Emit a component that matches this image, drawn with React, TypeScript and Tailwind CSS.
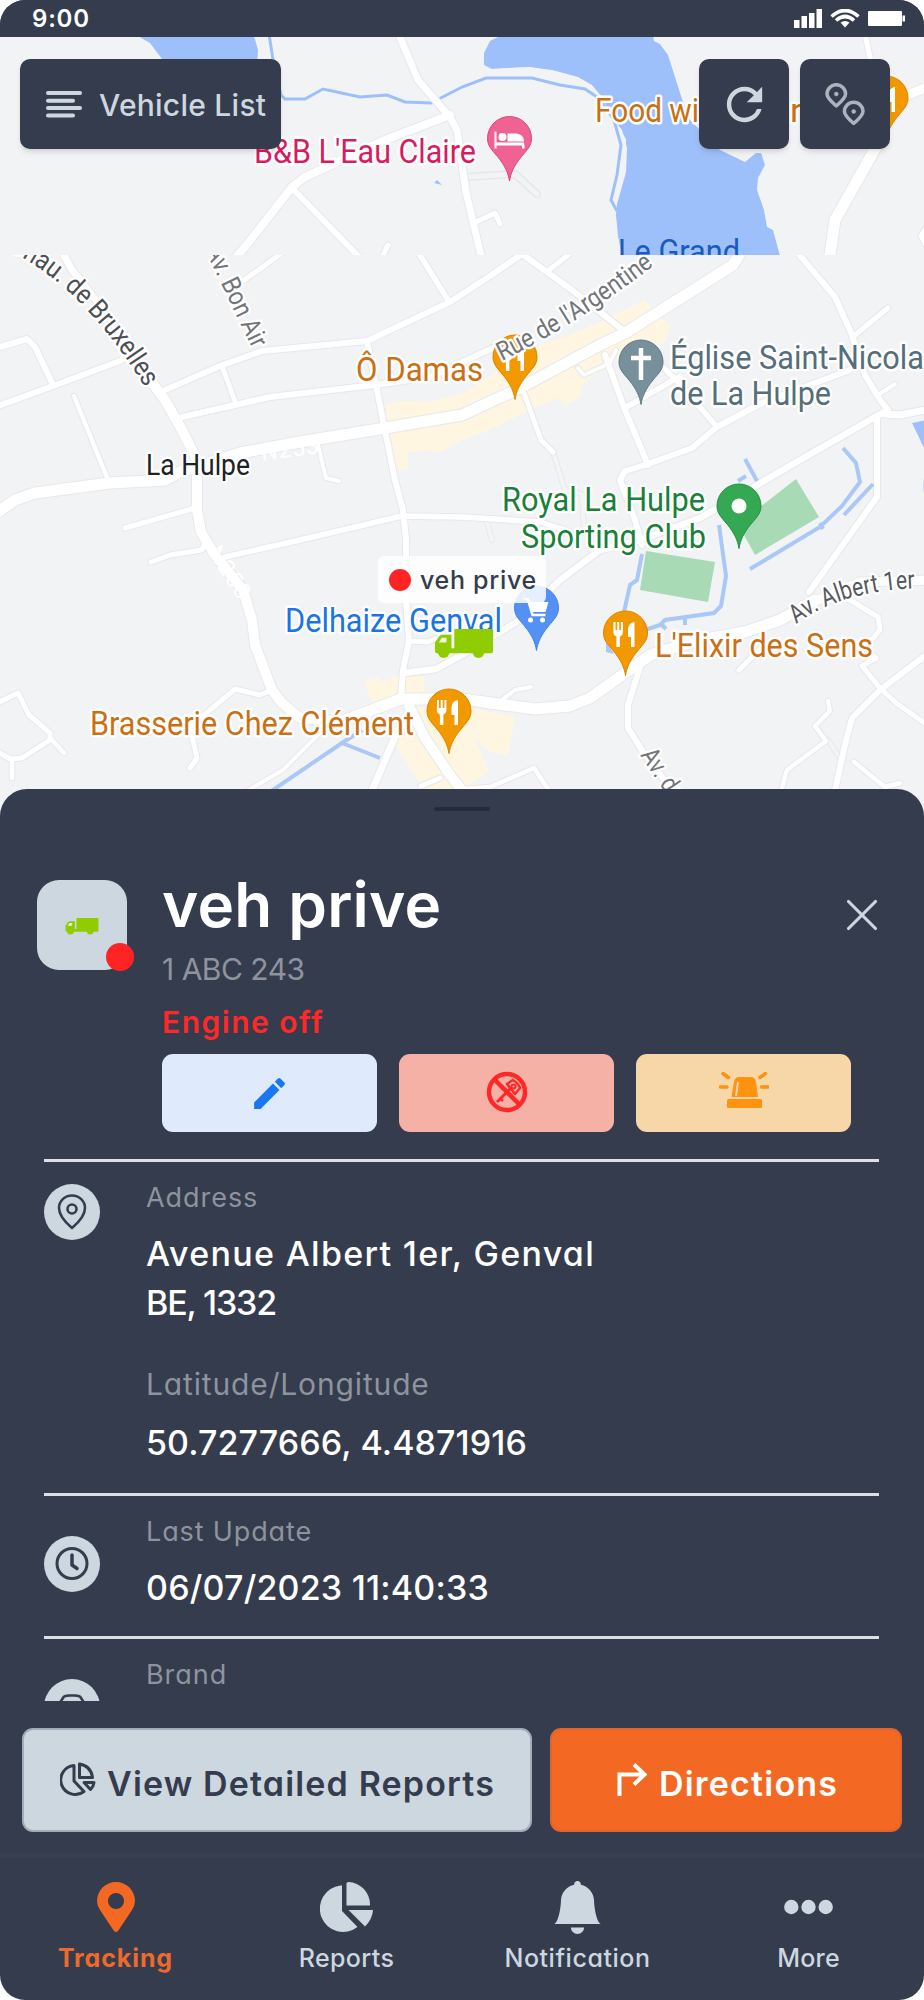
import React from 'react';
import { MdEdit, MdRefresh } from 'react-icons/md';
import { BsBellFill } from 'react-icons/bs';
import { X } from 'lucide-react';

type Road = [d: string, width: number];

interface PinProps {
  x: number;
  y: number;
  fill: string;
  stroke: string;
  children?: React.ReactNode;
}

interface LabelProps {
  x: number;
  y: number;
  w: number;
  fill: string;
  size?: number;
  children: string;
}

interface StreetNameProps {
  id: string;
  w: number;
  fill: string;
  size?: number;
  children: string;
}

// Roads of the upper tile, above the seam
const northRoads: Road[] = [
  ['M397 30L418 80L450 117L457 130L462 165L466 192L482 260', 7],
  ['M450 115L385 140L305 177L292 187L245 247L232 262', 8],
  ['M292 188L364 262', 6],
  ['M388 245L380 262', 5],
  ['M474 223L495 213L500 224', 5],
  ['M864 30L872 66', 5],
  ['M930 86L900 98', 9],
  ['M880 140L835 220L829 262', 11],
  ['M930 222L921 236L930 252', 5],
];

const southRoads: Road[] = [
  ['M60 248L72 270L110 318L150 382', 7],
  ['M0 347L27 339L35 347L53 385', 6],
  ['M-5 407L53 386L120 361L134 350', 6],
  ['M74 396L108 480', 4.5],
  ['M165 390L220 366L262 351L367 341L450 302L490 276L522 254', 6],
  ['M222 366L236 404', 5],
  ['M182 417L235 405L270 397L375 385L430 377L495 347', 6],
  ['M367 341L378 395L385 430L395 480L403 510L406 540L406 600L409 640L403 670L401 700', 6],
  ['M418 252L448 300', 5.5],
  ['M318 445L326 478L339 481', 4],
  ['M243 281L282 253', 5],
  ['M125 528L195 508', 5],
  ['M151 562L170 555L202 550L206 540', 5],
  ['M225 557L300 540L402 516L462 517L540 522L565 530', 5.5],
  ['M-5 704L18 693L29 715L50 733L50 740L22 758L10 759L-2 752', 5],
  ['M50 738L64 753M12 760L12 778', 4.5],
  ['M272 690L260 695L235 689L190 727L197 758L190 768', 5],
  ['M320 733L283 770L240 795', 4],
  ['M398 730L370 795', 7],
  ['M409 706L425 738L450 775L466 795', 10],
  ['M440 778L421 786', 5],
  ['M409 641L427 642L440 637', 5],
  ['M404 673L436 669L462 655L520 620L560 580L600 550L640 540L700 518L745 492L800 460L877 416L885 412', 6.5],
  ['M885 414L900 415L930 409', 7],
  ['M877 416L877 497L809 592', 6],
  ['M797 252L835 297L852 335L865 375L880 400L888 410', 6],
  ['M855 335L888 308', 5],
  ['M878 395L895 384', 4],
  ['M850 370L762 403L717 427L692 448L645 465L625 471L620 480L635 520L642 545', 6],
  ['M605 355L625 410L648 465', 6],
  ['M625 408L665 385L680 376M664 368L680 384L717 427', 5.5],
  ['M522 254L572 290L628 334', 6],
  ['M549 270L572 252', 5],
  ['M578 368L584 375L610 363L616 350', 4],
  ['M523 390L541 440L553 452', 5],
  ['M640 667L628 705L628 728L645 755L680 800', 6],
  ['M503 699L515 690L531 687', 4],
  ['M739 670L762 647', 5],
  ['M845 597L878 617L880 630L865 648L876 658L862 666L880 688L895 702L930 727', 5],
  ['M930 652L880 690L852 718L845 745L834 795', 6],
  ['M828 701L830 711L815 726L826 741L787 770L780 795', 4.5],
  ['M854 762L885 787L900 783', 4.5],
  ['M455 790L490 787L534 768L550 792', 4.5],
  ['M150 380L165 400L182 430L197 460L197 510L201 532L215 555L243 590L252 620L255 645L272 690L282 703L300 718L345 722', 10],
  ['M-5 514L15 500L35 493L110 483L165 480L180 472L240 453L300 442L385 428L462 415L520 388L600 345L625 333L660 311L733 265L742 250', 11],
  ['M340 722L401 699L462 699L535 709L570 706L590 698L625 673L650 655L700 640L745 632L780 620L815 600', 11],
  ['M809 604L860 582L930 580', 9],
];

const streams = [
  'M642 554L637 580L630 585L624 612',
  'M719 525L726 576L721 606L714 613L665 620L660 625L645 630',
  'M685 617L685 625',
  'M661 624L666 629',
  'M750 569L820 527L842 506L860 482L856 463L843 448',
  'M844 515L873 484',
  'M820 523L823 529',
  'M745 459L757 481',
  'M738 481L746 476',
  'M270 792L342 743L362 730',
  'M342 743L380 758',
];

const Roads = ({ list }: { list: Road[] }) => (
  <g fill="none" strokeLinecap="round" strokeLinejoin="round">
    {list.map(([d, w]) => (
      <path key={`case-${d}`} d={d} stroke="#e6e8eb" strokeWidth={w + 2} />
    ))}
    {list.map(([d, w]) => (
      <path key={d} d={d} stroke="#ffffff" strokeWidth={w} />
    ))}
  </g>
);

const Pin = ({ x, y, fill, stroke, children }: PinProps) => (
  <g transform={`translate(${x} ${y})`}>
    <path
      d="M0 42.500C-1.500 34-4 28-12 18C-18 11-22 7-22 0A22 22 0 0 1 22 0C22 7 18 11 12 18C4 28 1.500 34 0 42.500Z"
      fill={fill}
      stroke={stroke}
      strokeWidth="1"
    />
    {children}
  </g>
);

const Cutlery = () => (
  <g fill="#ffffff">
    <path d="M-12 -11h2v8h1.700v-8h2v8h1.700v-8h2v10q0 3.500-3 4.500V14h-3.500V3.500q-3-1-3-4.500Z" />
    <path d="M9 -11V14H5.500V4H2.500V-4Q3-10 9-11Z" />
  </g>
);

const Label = ({ x, y, w, fill, size = 34, children }: LabelProps) => (
  <text
    x={x}
    y={y}
    textLength={w}
    lengthAdjust="spacingAndGlyphs"
    fontSize={size}
    fill={fill}
    stroke="#ffffff"
    strokeWidth="5"
    strokeLinejoin="round"
    paintOrder="stroke"
  >
    {children}
  </text>
);

const StreetName = ({ id, w, fill, size = 26, children }: StreetNameProps) => (
  <text
    textLength={w}
    lengthAdjust="spacingAndGlyphs"
    fontSize={size}
    fill={fill}
    stroke="#ffffff"
    strokeWidth="5"
    strokeLinejoin="round"
    paintOrder="stroke"
  >
    <textPath href={`#${id}`} textLength={w} lengthAdjust="spacingAndGlyphs">
      {children}
    </textPath>
  </text>
);

const Truck = ({ className }: { className: string }) => (
  <svg viewBox="0 0 60 31" className={className} fill="#8fcc00">
    <path d="M20 0H58Q60 0 60 2V23Q60 25 58 25H2Q0 25 0 23V14L4 8Q5 6 8 6H17V20H20Z" />
    <circle cx="9" cy="24" r="6" />
    <circle cx="45" cy="24" r="6" />
    <path d="M4 14L7 9H12V14Z" fill="#eef3e0" />
  </svg>
);

const MapView = () => (
  <svg viewBox="0 37 924 790" className="block h-[790px] w-[924px]" fontFamily="Roboto, sans-serif">
    <defs>
      <clipPath id="north">
        <rect x="0" y="37" width="924" height="218" />
      </clipPath>
      <clipPath id="south">
        <rect x="0" y="255" width="924" height="572" />
      </clipPath>
      <path id="bruxelles" d="M8 250Q86 288 149 394" />
      <path id="bonair" d="M205 250L261 367" />
      <path id="argentine" d="M502 361Q590 318 680 245" />
      <path id="albert" d="M796 624Q845 588 930 588" />
      <path id="avd" d="M640 755L690 830" />
    </defs>
    <rect x="0" y="37" width="924" height="790" fill="#f1f3f5" />

    {/* Upper tile */}
    <g clipPath="url(#north)">
      <g fill="#9dc0fa">
        <path d="M138 36L150 43L162 59L166 66H257L258 50L254 36Z" />
        <path d="M500 36L490 41L484 53V65L492 69L528 67L552 70L578 77L592 85L602 97L610 115L622 130L627 148L626 172L621 190L617 204L616 215L618 236L622 256H780L773 230L767 227L764 210L757 190L758 178L765 165L761 153L756 153L745 162L720 150L690 120L682 99L668 55L660 44L654 41L653 36Z" />
        <path d="M437 180L442 185L434 183Z" />
      </g>
      {/* strip of land between the stream and the lake */}
      <path d="M492 72L530 70L558 75L582 83L598 97L610 118L623 140L620 175L613 203" fill="none" stroke="#f1f3f5" strokeWidth="6" />
      <path
        d="M269 34L274 66L281 95L285 99L305 99L323 89L360 97L387 95L405 102L431 103L462 87L486 78L532 78L560 85L585 89L600 99L614 120L621 145L617 175L611 200L617 211"
        fill="none"
        stroke="#9dc0fa"
        strokeWidth="3"
      />
      <path d="M467 177L515 174L537 194" fill="none" stroke="#e3e5e8" strokeWidth="8" strokeLinecap="round" strokeLinejoin="round" />
      <path d="M467 177L515 174L537 194" fill="none" stroke="#f1f3f5" strokeWidth="5.500" strokeLinecap="round" strokeLinejoin="round" />
      <Roads list={northRoads} />
      <Label x={254} y={162.500} w={222} fill="#d81b60">B&amp;B L'Eau Claire</Label>
      <Label x={595} y={122} w={104} fill="#cb6f12">Food wi</Label>
      <Label x={790} y={122} w={12} fill="#cb6f12">r</Label>
      <text x="618" y="263" fontSize="34" textLength="122" lengthAdjust="spacingAndGlyphs" fill="#1a5bbf">
        Le Grand
      </text>
      <Pin x={509.500} y={138.500} fill="#f06292" stroke="#e0447a">
        <path d="M-14 -7V10M14 6V10" stroke="#fff" strokeWidth="2" />
        <path d="M-14 4H14.500V10H12.500V7H-14Z" fill="#fff" />
        <circle cx="-7" cy="-1.500" r="4" fill="#fff" />
        <path d="M-2 3V-5H7Q14.500-4 14.500 3Z" fill="#fff" />
      </Pin>
      <Pin x={886} y={98} fill="#f29900" stroke="#dd8400">
        <Cutlery />
      </Pin>
    </g>

    {/* Lower tile */}
    <g clipPath="url(#south)">
      <g fill="#fef6e0">
        <path d="M385 405L400 401L430 402L462 393L500 370L540 345L570 335L600 322L645 300L653 312L660 318L670 325L665 342L630 352L583 383L580 398L565 405L558 398L520 415L490 430L462 440L440 452L425 450L408 453V470H397L390 435Z" />
        <path d="M364 682L378 677L381 682L398 676H424V700L372 702Z" />
        <path d="M395 725L409 708L462 706L515 717L508 756L487 750L475 738L489 772L470 785L455 790H425L395 745Z" />
      </g>
      <g fill="#a8dab5">
        <path d="M646 551L715 562L708 602L640 590Z" />
        <path d="M796 479L819 517L755 555L738 524Z" />
      </g>
      <path d="M912 423L926 420V452Z" fill="#9dc0fa" />
      <path d="M926 470Q921 486 926 502Z" fill="#9dc0fa" />
      <path d="M606 640L614 654L606 652Z" fill="#aac9fa" />
      <path d="M553 452L565 490L582 494L584 530M487 522L492 540M828 740L840 758" fill="none" stroke="#e6e8eb" strokeWidth="6" strokeLinecap="round" />
      <path d="M553 452L565 490L582 494L584 530M487 522L492 540M828 740L840 758" fill="none" stroke="#f3f4f6" strokeWidth="4" strokeLinecap="round" />
      <Roads list={southRoads} />
      <g fill="none" stroke="#a9c8f8" strokeWidth="4">
        {streams.map((d) => (
          <path key={d} d={d} />
        ))}
      </g>

      <text fontSize="23" fill="#ffffff" transform="translate(262 461) rotate(-8)" letterSpacing="1">N253</text>
      <text fontSize="23" fill="#ffffff" transform="translate(207 552) rotate(57)" letterSpacing="1">N253</text>

      <Pin x={515} y={357} fill="#f29900" stroke="#dd8400">
        <Cutlery />
      </Pin>
      <StreetName id="bruxelles" w={197} size={27} fill="#4b4e54">Chau. de Bruxelles</StreetName>
      <StreetName id="bonair" w={110} fill="#71757a">Av. Bon Air</StreetName>
      <StreetName id="argentine" w={180} fill="#71757a">Rue de l'Argentine</StreetName>
      <StreetName id="albert" w={126} fill="#55585d">Av. Albert 1er</StreetName>
      <StreetName id="avd" w={58} fill="#71757a">Av. de</StreetName>

      <Label x={356} y={381} w={127} fill="#cb6f12">Ô Damas</Label>
      <Label x={146} y={475} w={104} size={29} fill="#202124">La Hulpe</Label>
      <Label x={670} y={369} w={254} fill="#546e7a">Église Saint-Nicola</Label>
      <Label x={670} y={405} w={161} fill="#546e7a">de La Hulpe</Label>
      <Label x={502} y={511} w={203} fill="#188038">Royal La Hulpe</Label>
      <Label x={521} y={548} w={185} fill="#188038">Sporting Club</Label>
      <Label x={285} y={632} w={217} fill="#1a73e8">Delhaize Genval</Label>
      <Label x={655} y={657} w={218} fill="#cb6f12">L'Elixir des Sens</Label>
      <Label x={90} y={735} w={324} fill="#cb6f12">Brasserie Chez Clément</Label>

      <Pin x={641} y={362} fill="#78909c" stroke="#5c7885">
        <path d="M0 -14V18M-10 -4H10" stroke="#fff" strokeWidth="4.500" />
      </Pin>
      <Pin x={739} y={506} fill="#34a853" stroke="#1f9040">
        <circle r="7.500" fill="#fff" />
      </Pin>
      <Pin x={536.500} y={608} fill="#5491f5" stroke="#4583ee">
        <path d="M-14 -10H-9L-4 4H9L12 -6H-7Z" fill="#fff" />
        <path d="M-9 -10L-4 7H9" fill="none" stroke="#fff" strokeWidth="2.500" />
        <circle cx="-6" cy="12" r="2.500" fill="#fff" />
        <circle cx="6" cy="12" r="2.500" fill="#fff" />
      </Pin>
      <Pin x={625.500} y={633} fill="#f29900" stroke="#dd8400">
        <Cutlery />
      </Pin>
      <Pin x={449} y={711} fill="#f29900" stroke="#dd8400">
        <Cutlery />
      </Pin>
    </g>
  </svg>
);

const StatusBar = () => (
  <header className="flex h-[37px] items-center justify-between bg-[#343c4d] pl-8 pr-[19px]">
    <span className="text-[24px] font-semibold leading-none tracking-[0.8px] text-white">9:00</span>
    <div className="flex items-center gap-2">
      <svg viewBox="0 0 28 19" className="h-[19px] w-7" fill="#fff">
        <rect x="0" y="11" width="5.500" height="8" />
        <rect x="7.500" y="7" width="5.500" height="12" />
        <rect x="15" y="4" width="5.500" height="15" />
        <rect x="22.500" y="0" width="5.500" height="19" />
      </svg>
      <svg viewBox="0 0 30 19" className="h-[19px] w-[30px]" fill="none" stroke="#fff" strokeWidth="3.600">
        <path d="M1.500 7.500Q15-4.500 28.500 7.500" />
        <path d="M6 11.500Q15 3.500 24 11.500" />
        <path d="M10.500 13.500Q15 10.500 19.500 13.500L15 18.500Z" fill="#fff" stroke="none" />
      </svg>
      <svg viewBox="0 0 37 15" className="h-[15px] w-[37px]" fill="#fff">
        <rect x="0" y="0" width="34" height="15" rx="1" />
        <rect x="34.500" y="4.500" width="2.500" height="6" />
      </svg>
    </div>
  </header>
);

const MapControls = () => (
  <div className="absolute inset-x-0 top-[22px] flex pl-5 pr-[34px] text-[#cdd7e0]">
    <button className="flex h-[90px] w-[261px] items-center rounded-[10px] bg-[#343c4d] pl-[26px] shadow-md">
      <svg viewBox="0 0 36 27" className="h-[27px] w-9" fill="currentColor">
        <rect width="36" height="4" rx="2" />
        <rect y="7.700" width="29" height="4" rx="2" />
        <rect y="15" width="36" height="4" rx="2" />
        <rect y="22.500" width="29" height="4" rx="2" />
      </svg>
      <span className="ml-[17px] mt-[2px] whitespace-nowrap text-[30px] font-medium leading-none tracking-[0.25px]">Vehicle List</span>
    </button>
    <div className="ml-auto flex gap-[11px]">
      <button className="flex size-[90px] items-center justify-center rounded-[10px] bg-[#343c4d] shadow-md">
        <MdRefresh className="size-[53px]" />
      </button>
      <button className="flex size-[90px] items-center justify-center rounded-[10px] bg-[#343c4d] shadow-md">
        <svg viewBox="0 0 40 43" className="h-[43px] w-10" fill="none" stroke="#aab4be" strokeWidth="3.500" strokeLinejoin="round">
          <path d="M11.300 23Q2 15 2 11A9.300 9.300 0 0 1 20.600 11Q20.600 15 11.300 23Z" />
          <circle cx="11.300" cy="11" r="2" fill="#aab4be" strokeWidth="0.500" />
          <path d="M28.700 40.500Q19.400 32.500 19.400 28.500A9.300 9.300 0 0 1 38 28.500Q38 32.500 28.700 40.500Z" />
          <circle cx="28.700" cy="28.500" r="2" fill="#aab4be" strokeWidth="0.500" />
        </svg>
      </button>
    </div>
  </div>
);

const VehicleHeader = () => (
  <div className="flex pl-[37px]">
    <div className="relative mt-3 flex size-[90px] items-center justify-center rounded-[22px] bg-[#cdd7e0]">
      <Truck className="mt-[2px] h-[17px] w-[34px]" />
      <span className="absolute -bottom-[1px] -right-[7px] size-7 rounded-full bg-[#ff2424]" />
    </div>
    <div className="ml-[35px]">
      <div className="flex h-[74px]">
        <h1 className="w-[673px] whitespace-nowrap text-[62px] font-semibold leading-[73px] tracking-[0.2px] text-white">veh prive</h1>
        <button className="mt-5 flex size-[54px] items-center justify-center text-[#cdd7e0]">
          <X className="size-[54px]" strokeWidth={1.400} />
        </button>
      </div>
      <p className="text-[30px] leading-[54px] tracking-[-0.5px] text-[#8e939d]">1 ABC 243</p>
      <p className="text-[30px] font-semibold leading-[52px] tracking-[1.5px] text-[#ff2828]">Engine off</p>
      <div className="mt-[6px] flex gap-[22px]">
        <button className="flex h-[78px] w-[215px] items-center justify-center rounded-[11px] bg-[#dfeafd]">
          <MdEdit className="size-[41px] text-[#1877f2]" />
        </button>
        <button className="flex h-[78px] w-[215px] items-center justify-center rounded-[11px] bg-[#f6b1a6]">
          <svg viewBox="0 0 42 42" className="mb-[2px] size-[42px]" fill="none" stroke="#ff2828">
            <path d="M11 31L25 17" strokeWidth="3" />
            <path d="M14 27L17 30" strokeWidth="2.500" />
            <path d="M21 13L27 9Q33 13 34 17L29 23Z" strokeWidth="2.500" strokeLinejoin="round" />
            <circle cx="27.500" cy="15.500" r="2" strokeWidth="2" />
            <path d="M8 8L34 34" strokeWidth="4.500" />
            <circle cx="21" cy="21" r="18" strokeWidth="4.500" />
          </svg>
        </button>
        <button className="flex h-[78px] w-[215px] items-center justify-center rounded-[11px] bg-[#f7d7a7]">
          <svg viewBox="0 0 50 38" className="mb-[6px] h-[38px] w-[50px]" fill="#ff9310">
            <path d="M12.500 26L15 11Q16 6 20 6H32Q36 6 37 11L39 26Z" />
            <path d="M19 11L17 25" stroke="#f7d7a7" strokeWidth="2" />
            <rect x="8" y="28" width="35" height="9" rx="1.500" />
            <path d="M1.500 16H8M42.500 16H49M4 2.500L9.500 6.500M46.500 2.500L41 6.500" stroke="#ff9310" strokeWidth="3.500" strokeLinecap="round" />
          </svg>
        </button>
      </div>
    </div>
  </div>
);

const RowIcon = ({ className, children }: { className: string; children: React.ReactNode }) => (
  <div className={`flex size-[56px] shrink-0 items-center justify-center rounded-full bg-[#cdd7e0] ${className}`}>
    <svg viewBox="0 0 34 36" className="h-9 w-[34px]" fill="none" stroke="#343c4d" strokeWidth="2.600" strokeLinecap="round" strokeLinejoin="round">
      {children}
    </svg>
  </div>
);

const Details = () => (
  <div className="ml-11 mt-[27px] h-[542px] w-[835px] overflow-hidden">
    <section className="flex h-[334px] border-t-3 border-[#dcdfe4]">
      <RowIcon className="mt-[22px]">
        <path d="M17 34Q4 23 4 14A13 12.500 0 0 1 30 14Q30 23 17 34Z" />
        <circle cx="17" cy="15" r="4.500" />
      </RowIcon>
      <div className="ml-[46px] mt-4 whitespace-nowrap">
        <p className="text-[27px] leading-10 tracking-[0.95px] text-[#8e939d]">Address</p>
        <p className="mt-[11px] text-[34px] font-medium leading-[49px] tracking-[1.3px] text-white">Avenue Albert 1er, Genval</p>
        <p className="text-[34px] font-medium leading-[49px] tracking-[-1.2px] text-white">BE, 1332</p>
        <p className="mt-[37px] text-[30px] leading-10 tracking-[0.85px] text-[#8e939d]">Latitude/Longitude</p>
        <p className="mt-[14px] text-[34px] font-medium leading-[49px] tracking-[0.1px] text-white">50.7277666, 4.4871916</p>
      </div>
    </section>
    <section className="flex h-[143px] border-t-3 border-[#dcdfe4]">
      <RowIcon className="mt-10">
        <circle cx="17" cy="17.500" r="15" strokeWidth="3" />
        <path d="M17 9V19L22 22.500" strokeWidth="3.500" />
      </RowIcon>
      <div className="ml-[46px] mt-4 whitespace-nowrap">
        <p className="text-[27px] leading-10 tracking-[0.87px] text-[#8e939d]">Last Update</p>
        <p className="mt-[11px] text-[34px] font-medium leading-[49px] tracking-[0.2px] text-white">06/07/2023 11:40:33</p>
      </div>
    </section>
    <section className="flex h-[100px] border-t-3 border-[#dcdfe4]">
      <RowIcon className="mt-10">
        <path d="M4 15L8 9Q9 6.500 14 6.500H20Q25 6.500 26 9L30 15V28H4Z" />
      </RowIcon>
      <p className="ml-[46px] mt-4 text-[27px] leading-10 tracking-[0.95px] text-[#8e939d]">Brand</p>
    </section>
  </div>
);

const Actions = () => (
  <div className="mt-[27px] flex gap-[18px] pl-[22px]">
    <button className="flex h-[104px] w-[510px] items-center whitespace-nowrap rounded-[11px] border-2 border-[#a4adbb] bg-[#cdd7e0] pl-9 text-[34px] font-semibold text-[#343c4d]">
      <svg viewBox="0 0 36 34" className="mb-[2px] h-[34px] w-9" fill="none" stroke="currentColor" strokeWidth="3" strokeLinejoin="round">
        <path d="M14 3.500A14.500 14.500 0 1 0 24 29.500L14 19Z" />
        <path d="M19.500 2V15.500H32.500Q31 4 19.500 2Z" />
        <path d="M24 20.500H34Q33.500 24.500 30.500 27.500Z" />
      </svg>
      <span className="ml-[11px] mt-2 leading-none tracking-[1.15px]">View Detailed Reports</span>
    </button>
    <button className="flex h-[104px] w-[352px] items-center whitespace-nowrap rounded-[11px] border-2 border-[#dd6630] bg-[#f36822] pl-[65px] text-[34px] font-semibold text-white">
      <svg viewBox="0 0 30 34" className="mb-[2px] h-[34px] w-[30px]" fill="none" stroke="currentColor" strokeWidth="4">
        <path d="M2.500 34V12.500H27" />
        <path d="M17 2.500L27.500 12.500L17 22.500" />
      </svg>
      <span className="ml-3 mt-2 leading-none tracking-[1.2px]">Directions</span>
    </button>
  </div>
);

const navItems = [
  {
    label: 'Tracking',
    labelClass: 'font-bold text-[#ee6a2b] tracking-[0.9px]',
    icon: (
      <svg viewBox="0 0 38 50" className="h-[50px] w-[38px]" fill="#f36822">
        <path
          fillRule="evenodd"
          d="M19 50Q17.500 50 16 47.500L3 28Q0 23.500 0 19A19 19 0 0 1 38 19Q38 23.500 35 28L22 47.500Q20.500 50 19 50ZM19 11A8 8 0 1 0 19 27A8 8 0 1 0 19 11Z"
        />
      </svg>
    ),
  },
  {
    label: 'Reports',
    labelClass: 'font-medium text-[#cdd7e0] tracking-[0.4px]',
    icon: (
      <svg viewBox="0 0 53 50" className="h-[50px] w-[53px]" fill="#cdd7e0">
        <path d="M22 3.500V29L37.500 45A23.300 23.300 0 1 1 20.500 3.500Z" />
        <path d="M26.500 1.500Q26.500 0 28.500 0A22.500 22.500 0 0 1 50 22V23.500H26.500Z" />
        <path d="M28.500 28H53Q52.500 37 45 44.500Z" />
      </svg>
    ),
  },
  {
    label: 'Notification',
    labelClass: 'font-medium text-[#cdd7e0] tracking-[0.55px]',
    icon: <BsBellFill className="size-[53px] text-[#cdd7e0]" />,
  },
  {
    label: 'More',
    labelClass: 'font-medium text-[#cdd7e0] tracking-[0.2px]',
    icon: (
      <svg viewBox="0 0 49 50" className="h-[50px] w-[49px]" fill="#cdd7e0">
        <circle cx="7.300" cy="25" r="7.200" />
        <circle cx="24.500" cy="25" r="7.200" />
        <circle cx="41.700" cy="25" r="7.200" />
      </svg>
    ),
  },
];

const BottomNav = () => (
  <nav className="mt-[21px] grid grid-cols-4 border-t-4 border-[#373f50]">
    {navItems.map(({ label, labelClass, icon }) => (
      <div key={label} className="flex flex-col items-center pt-[23px]">
        <div className="flex h-[54px] items-center">{icon}</div>
        <span className={`mt-[9px] text-[25px] leading-[30px] ${labelClass}`}>{label}</span>
      </div>
    ))}
  </nav>
);

export default function App() {
  return (
    <div className="h-[2000px] w-[924px] bg-white">
      <div className="h-[2000px] overflow-hidden rounded-[25px] bg-[#343c4d] font-[Inter,sans-serif] [font-feature-settings:'cv11']">
        <StatusBar />
        <main className="relative h-[790px]">
          <MapView />
          <MapControls />
          <div className="absolute left-[378px] top-[519px] flex h-[47px] w-[168px] items-center rounded-md bg-white/85 pl-[11px] text-[#343c4d]">
            <span className="size-[22px] rounded-full bg-[#ff2424]" />
            <span className="ml-[9px] mt-[2px] whitespace-nowrap text-[25px] font-medium leading-none tracking-[0.7px]">veh prive</span>
          </div>
          <Truck className="absolute left-[434px] top-[592px] h-[30px] w-[60px]" />
        </main>
        <div className="relative -mt-[38px] rounded-t-[27px] bg-[#343c4d]">
          <div className="flex h-[79px] justify-center pt-[18px]">
            <span className="h-1 w-14 rounded-full bg-[#252b38]" />
          </div>
          <VehicleHeader />
          <Details />
          <Actions />
          <BottomNav />
        </div>
      </div>
    </div>
  );
}
